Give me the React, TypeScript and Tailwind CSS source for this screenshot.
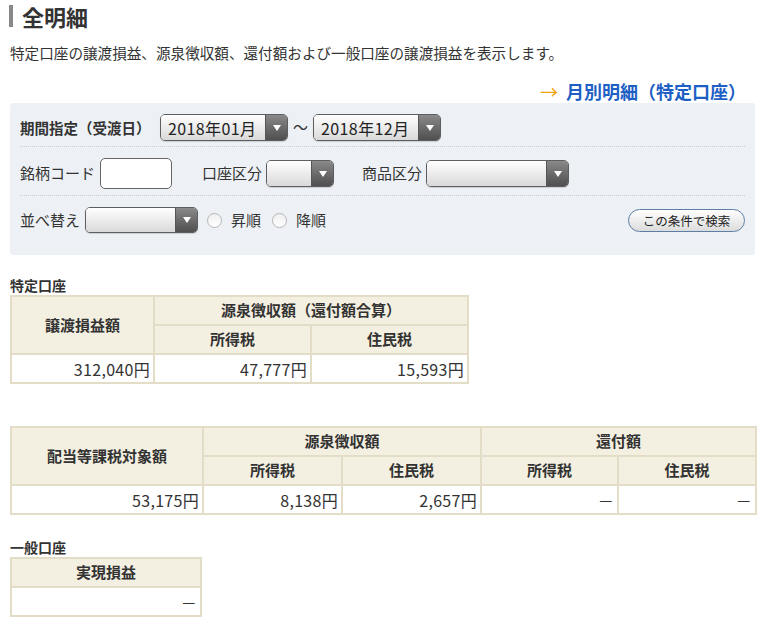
import React from "react";

const font = { fontFamily: '"Noto Sans CJK JP", "Noto Sans", sans-serif' };

function Arrow() {
  return (
    <svg width="8" height="6" viewBox="0 0 8 6">
      <path d="M0 0 L8 0 L4 6 Z" fill="#fff" />
    </svg>
  );
}

function Select({ w, value, h = "h-[27px]" }: { w: string; value?: string; h?: string }) {
  return (
    <div className={`${w} ${h} flex rounded-[5px] border border-[#5e5e5e] overflow-hidden shadow-[0_1px_1px_rgba(0,0,0,0.15)]`}>
      <div className="flex-1 flex items-center pl-[7px] text-[16px] tracking-[0.4px] text-[#222] bg-gradient-to-b from-[#ffffff] to-[#d9d9d9]">
        {value}
      </div>
      <div className="w-[22px] flex items-center justify-center bg-gradient-to-b from-[#8a8a8a] to-[#4f4f4f] border-l border-[#555]">
        <Arrow />
      </div>
    </div>
  );
}

function Radio() {
  return <span className="w-[15px] h-[15px] rounded-full border border-[#b5b5b5] bg-gradient-to-b from-[#f0f0f0] to-white inline-block" />;
}

const th = "border-2 border-[#e3ddc7] bg-[#f4f0e1] font-bold text-[15px] text-[#333] text-center h-[29px] p-0";
const td = "border-2 border-[#e3ddc7] bg-white text-[16px] tracking-[0.3px] text-[#333] text-right pr-[3px] h-[29px] p-0";

export default function App() {
  return (
    <div className="w-[768px] h-[641px] bg-white text-[#333] overflow-hidden" style={font}>
      <div className="pl-[9px] pt-[5px] flex items-center">
        <div className="w-[4px] h-[22px] bg-[#888]" />
        <div className="ml-[9px] text-[22px] leading-[22px] font-bold text-[#333]">全明細</div>
      </div>
      <div className="pl-[10px] mt-[17px] text-[14.6px] leading-[18px] text-[#333]">
        特定口座の譲渡損益、源泉徴収額、還付額および一般口座の譲渡損益を表示します。
      </div>
      <div className="flex justify-end pr-[22px] mt-[19px] text-[18px] leading-[20px] font-bold">
        <span className="text-[#f0a30a] font-normal mr-[8px]">→</span>
        <span className="text-[#1d5fc4]">月別明細（特定口座）</span>
      </div>
      <div className="ml-[10px] mr-[13px] mt-[2px] bg-[#edf1f5] rounded-[3px] px-[10px] pt-[11px] pb-[22px] text-[15px]">
        <div className="flex items-center h-[27px] mb-[5px]">
          <span className="font-bold w-[140px] text-[14.5px]">期間指定（受渡日）</span>
          <Select w="w-[128px]" value="2018年01月" />
          <span className="mx-[5px] text-[15px]">〜</span>
          <Select w="w-[128px]" value="2018年12月" />
        </div>
        <div className="border-t border-dotted border-[#c8cdd2]" />
        <div className="flex items-center pt-[11px] pb-[6px]">
          <span className="w-[80px]">銘柄コード</span>
          <div className="w-[72px] h-[31px] rounded-[5px] border border-[#666] bg-white" />
          <span className="ml-[30px] w-[64px]">口座区分</span>
          <Select w="w-[68px]" />
          <span className="ml-[28px] w-[64px]">商品区分</span>
          <Select w="w-[143px]" />
        </div>
        <div className="border-t border-dotted border-[#c8cdd2]" />
        <div className="flex items-center pt-[11px] h-[37px]">
          <span className="w-[65px]">並べ替え</span>
          <Select w="w-[113px]" h="h-[26px]" />
          <span className="ml-[9px] flex"><Radio /></span>
          <span className="ml-[9px]">昇順</span>
          <span className="ml-[11px] flex"><Radio /></span>
          <span className="ml-[9px]">降順</span>
          <div className="flex-1" />
          <button className="w-[117px] h-[23px] rounded-full border border-[#5d7fa6] bg-gradient-to-b from-white to-[#dcdcdc] text-[12.5px] leading-[21px] text-[#222]">
            この条件で検索
          </button>
        </div>
      </div>

      <div className="pl-[10px] mt-[22px] text-[14px] font-bold leading-[17px]">特定口座</div>
      <table className="ml-[10px] mt-[1px] border-collapse border-2 border-[#e3ddc7]">
        <tbody>
          <tr>
            <th rowSpan={2} className={`${th} w-[143px]`}>譲渡損益額</th>
            <th colSpan={2} className={th}>源泉徴収額（還付額合算）</th>
          </tr>
          <tr>
            <th className={`${th} w-[157px]`}>所得税</th>
            <th className={`${th} w-[157px]`}>住民税</th>
          </tr>
          <tr>
            <td className={td}>312,040円</td>
            <td className={td}>47,777円</td>
            <td className={td}>15,593円</td>
          </tr>
        </tbody>
      </table>

      <div className="h-[42px]" />
      <table className="ml-[10px] border-collapse border-2 border-[#e3ddc7]">
        <tbody>
          <tr>
            <th rowSpan={2} className={`${th} w-[192px]`}>配当等課税対象額</th>
            <th colSpan={2} className={th}>源泉徴収額</th>
            <th colSpan={2} className={th}>還付額</th>
          </tr>
          <tr>
            <th className={`${th} w-[139px]`}>所得税</th>
            <th className={`${th} w-[139px]`}>住民税</th>
            <th className={`${th} w-[137px]`}>所得税</th>
            <th className={`${th} w-[138px]`}>住民税</th>
          </tr>
          <tr>
            <td className={td}>53,175円</td>
            <td className={td}>8,138円</td>
            <td className={td}>2,657円</td>
            <td className={td}>－</td>
            <td className={td}>－</td>
          </tr>
        </tbody>
      </table>

      <div className="pl-[10px] mt-[24px] text-[14px] font-bold leading-[17px]">一般口座</div>
      <table className="ml-[10px] mt-[1px] border-collapse border-2 border-[#e3ddc7]">
        <tbody>
          <tr>
            <th className={`${th} w-[190px]`}>実現損益</th>
          </tr>
          <tr>
            <td className={td}>－</td>
          </tr>
        </tbody>
      </table>
    </div>
  );
}
